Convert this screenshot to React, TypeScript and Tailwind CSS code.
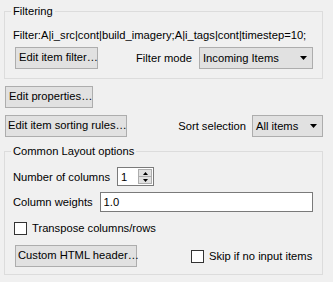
const font = { fontFamily: '"Liberation Sans", Arial, sans-serif' };

function Button({ label, className }: { label: string; className: string }) {
  return (
    <button
      type="button"
      className={`h-[22px] whitespace-nowrap border border-[#adadad] bg-[#e1e1e1] text-left leading-none text-black ${className}`}
    >
      {label}
    </button>
  );
}

function Combo({ value, className }: { value: string; className: string }) {
  return (
    <div
      className={`flex h-[22px] items-center justify-between border border-[#adadad] bg-[#e1e1e1] pl-[3px] pr-[5px] ${className}`}
    >
      <span className="whitespace-nowrap">{value}</span>
      <svg width="7" height="4" viewBox="0 0 7 4">
        <path d="M0 0H7L3.5 4Z" fill="#000" />
      </svg>
    </div>
  );
}

function CheckBox({ label }: { label: string }) {
  return (
    <label className="flex items-center gap-[5px] whitespace-nowrap">
      <span className="h-[13px] w-[13px] border border-[#333] bg-white" />
      <span>{label}</span>
    </label>
  );
}

export default function App() {
  return (
    <div
      className="h-[282px] w-[333px] overflow-hidden bg-[#f0f0f0] pt-[4px] text-[11.2px] leading-[14px] text-black"
      style={font}
    >
      {/* Filtering */}
      <fieldset className="ml-[4px] w-[319px] border border-[#dcdcdc] px-0 pb-[9px]">
        <legend className="ml-[6px] px-[2px] leading-[14px]">Filtering</legend>
        <div className="mt-[10px] whitespace-nowrap pl-[8px]">
          Filter:A|i_src|cont|build_imagery;A|i_tags|cont|timestep=10;
        </div>
        <div className="mt-[5px] flex items-center pl-[10px] pr-[9px]">
          <Button label="Edit item filter…" className="w-[83px] px-[3px]" />
          <span className="ml-auto">Filter mode</span>
          <Combo value="Incoming Items" className="ml-[7px] w-[114px]" />
        </div>
      </fieldset>

      <div className="ml-[5px] mt-[7px]">
        <Button label="Edit properties…" className="w-[88px] px-[3px]" />
      </div>

      <div className="ml-[4px] mt-[7px] flex w-[319px] items-center pl-[1px]">
        <Button label="Edit item sorting rules…" className="w-[122px] px-[2px]" />
        <span className="ml-auto">Sort selection</span>
        <Combo value="All items" className="ml-[6px] w-[71px]" />
      </div>

      {/* Common Layout options */}
      <fieldset className="ml-[4px] mt-[7px] w-[319px] border border-[#dcdcdc] px-0 pb-[7px]">
        <legend className="ml-[6px] px-[2px] leading-[14px]">Common Layout options</legend>
        <div className="mt-[9px] flex items-center pl-[8px]">
          <span>Number of columns</span>
          <div className="ml-[7px] flex h-[19px] w-[37px] items-center border border-[#7a7a7a] bg-white">
            <span className="flex-1 pl-[3px]">1</span>
            <div className="mr-[1px] flex h-[15px] w-[14px] flex-col">
              <div className="flex flex-1 items-center justify-center border border-[#adadad] bg-[#e1e1e1]">
                <svg width="5" height="3" viewBox="0 0 5 3">
                  <path d="M0 3H5L2.5 0Z" fill="#000" />
                </svg>
              </div>
              <div className="flex flex-1 items-center justify-center border border-t-0 border-[#adadad] bg-[#e1e1e1]">
                <svg width="5" height="3" viewBox="0 0 5 3">
                  <path d="M0 0H5L2.5 3Z" fill="#000" />
                </svg>
              </div>
            </div>
          </div>
        </div>
        <div className="mt-[6px] flex items-center pl-[8px] pr-[9px]">
          <span>Column weights</span>
          <input
            readOnly
            value="1.0"
            className="ml-[7px] h-[20px] flex-1 border border-[#7a7a7a] bg-white px-[3px] text-[11.2px] outline-none"
            style={font}
          />
        </div>
        <div className="mt-[9px] pl-[9px]">
          <CheckBox label="Transpose columns/rows" />
        </div>
        <div className="mt-[10px] flex items-center pl-[10px]">
          <Button label="Custom HTML header…" className="w-[122px] px-[2px]" />
          <div className="ml-[54px]">
            <CheckBox label="Skip if no input items" />
          </div>
        </div>
      </fieldset>
    </div>
  );
}
